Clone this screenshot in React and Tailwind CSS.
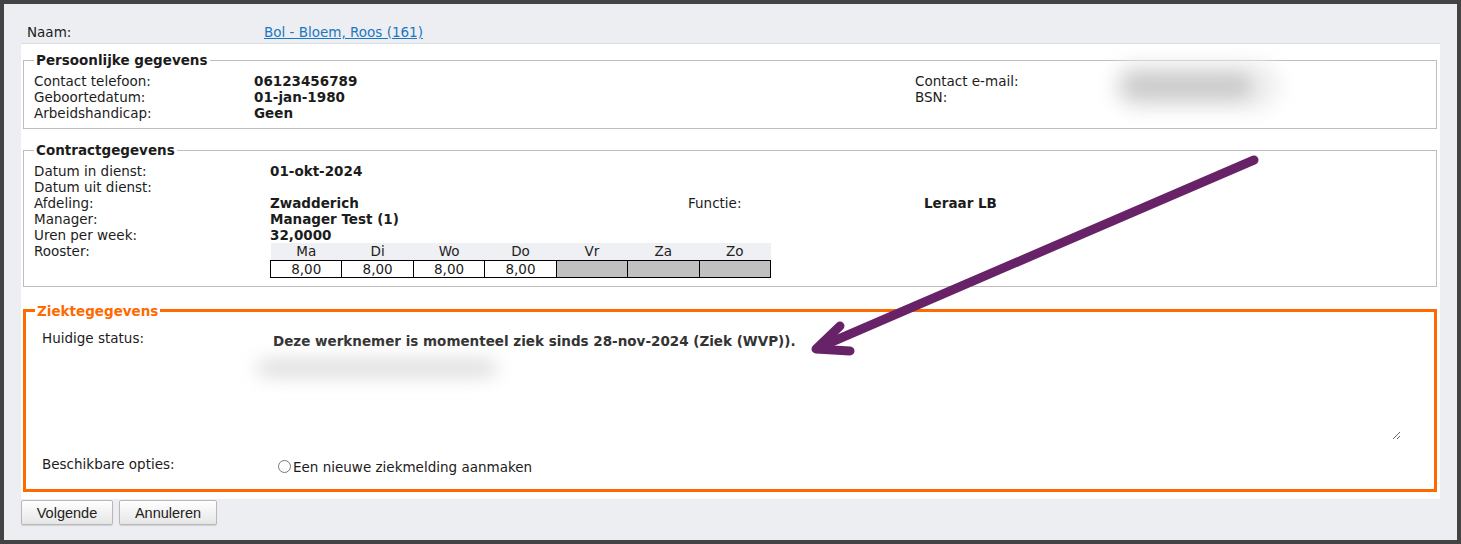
const font = { fontFamily: '"DejaVu Sans", Verdana, sans-serif' };

function Arrow() {
  return (
    <svg
      className="pointer-events-none absolute left-0 top-0"
      width="1461"
      height="544"
      viewBox="0 0 1461 544"
    >
      <g
        fill="none"
        stroke="#682368"
        strokeWidth="9"
        strokeLinecap="round"
        strokeLinejoin="round"
      >
        <path d="M1250 156 L816 343" />
        <path d="M836 322 L812 345 L846 347" />
      </g>
    </svg>
  );
}

function Rooster() {
  const days = ["Ma", "Di", "Wo", "Do", "Vr", "Za", "Zo"];
  const hours = ["8,00", "8,00", "8,00", "8,00", null, null, null];

  return (
    <table className="w-[501px] border-collapse text-[13.5px] leading-[16px]">
      <thead>
        <tr className="bg-[#eef0f3]">
          {days.map((d) => (
            <th key={d} className="h-[17px] p-0 text-center font-normal text-[#222]">
              {d}
            </th>
          ))}
        </tr>
      </thead>
      <tbody>
        <tr>
          {hours.map((h, i) => (
            <td
              key={i}
              className={`h-[17px] w-[71px] border border-black p-0 text-center ${
                h ? "bg-white" : "bg-[#c0c0c0]"
              }`}
            >
              {h}
            </td>
          ))}
        </tr>
      </tbody>
    </table>
  );
}

function Blur({ className }) {
  return <div className={`rounded-full blur-[9px] ${className}`} />;
}

export default function App() {
  return (
    <div
      className="relative h-[544px] w-[1461px] overflow-hidden border-4 border-[#434343] bg-[#edeef2] px-[17px] text-[13.5px] leading-[16px] text-[#1c1c1c]"
      style={font}
    >
      {/* Naam */}
      <div className="flex h-[39px] items-end pb-[3px] pl-[6px]">
        <span className="w-[237px]">Naam:</span>
        <a href="#" className="text-[#1a78c2] underline">
          Bol - Bloem, Roos (161)
        </a>
      </div>

      {/* Panel */}
      <div className="h-[456px] border-t border-[#dcdde1] bg-white pl-[2px] pr-[3px] pt-[8px]">
        <fieldset className="border border-[#bdbdbd] pb-[7px] pl-[10px]">
          <legend className="px-[2px] font-bold">Persoonlijke gegevens</legend>
          <div className="mt-[5px] grid grid-cols-[220px_661px_194px_1fr]">
            <span>Contact telefoon:</span>
            <b>06123456789</b>
            <span>Contact e-mail:</span>
            <div className="relative">
              <Blur className="absolute left-[2px] top-[-12px] h-[50px] w-[170px] bg-[#f0f0f0]" />
              <Blur className="absolute left-[14px] top-[0px] h-[26px] w-[130px] bg-[#cacaca]" />
            </div>
            <span>Geboortedatum:</span>
            <b>01-jan-1980</b>
            <span>BSN:</span>
            <span />
            <span>Arbeidshandicap:</span>
            <b>Geen</b>
          </div>
        </fieldset>

        <fieldset className="mt-[13px] border border-[#bdbdbd] pb-[8px] pl-[10px]">
          <legend className="px-[2px] font-bold">Contractgegevens</legend>
          <div className="mt-[5px] grid grid-cols-[236px_418px_236px_1fr]">
            <span>Datum in dienst:</span>
            <b className="col-span-3">01-okt-2024</b>
            <span>Datum uit dienst:</span>
            <span className="col-span-3 h-[16px]" />
            <span>Afdeling:</span>
            <b>Zwadderich</b>
            <span>Functie:</span>
            <b>Leraar LB</b>
            <span>Manager:</span>
            <b className="col-span-3">Manager Test (1)</b>
            <span>Uren per week:</span>
            <b className="col-span-3">32,0000</b>
            <span>Rooster:</span>
            <div className="col-span-3">
              <Rooster />
            </div>
          </div>
        </fieldset>

        <fieldset className="mt-[16px] border-[3px] border-[#ff6a00] pb-[14px] pl-[9px]">
          <legend className="px-[2px] font-bold text-[#ff6a00]">Ziektegegevens</legend>
          <div className="grid grid-cols-[209px_1fr] pl-[7px] pt-[11px]">
            <span>Huidige status:</span>
            <div>
              <p className="ml-[22px] mt-[3px] font-bold text-[#333]">
                Deze werknemer is momenteel ziek sinds 28-nov-2024 (Ziek (WVP)).
              </p>
              <div className="relative mt-[6px] w-[1150px]">
                <Blur className="absolute left-[6px] top-[4px] h-[18px] w-[240px] bg-[#dedede]" />
                <textarea
                  className="block h-[85px] w-full resize border-0 bg-transparent outline-none"
                  readOnly
                />
              </div>
            </div>
            <span className="mt-[16px]">Beschikbare opties:</span>
            <label className="ml-[27px] mt-[19px] flex items-center gap-[2px]">
              <input type="radio" className="m-0 h-[13px] w-[13px]" />
              Een nieuwe ziekmelding aanmaken
            </label>
          </div>
        </fieldset>
      </div>

      {/* Buttons */}
      <div className="mt-px flex gap-[6px]" style={{ fontFamily: '"Liberation Sans", Arial, sans-serif' }}>
        <button className="h-[25px] w-[92px] rounded-[2px] border border-[#b8b8b8] bg-gradient-to-b from-white to-[#e6e6e6] text-[14.5px] text-[#222] shadow-[0_1px_1px_rgba(0,0,0,0.12)]">
          Volgende
        </button>
        <button className="h-[25px] w-[98px] rounded-[2px] border border-[#b8b8b8] bg-gradient-to-b from-white to-[#e6e6e6] text-[14.5px] text-[#222] shadow-[0_1px_1px_rgba(0,0,0,0.12)]">
          Annuleren
        </button>
      </div>

      <Arrow />
    </div>
  );
}
